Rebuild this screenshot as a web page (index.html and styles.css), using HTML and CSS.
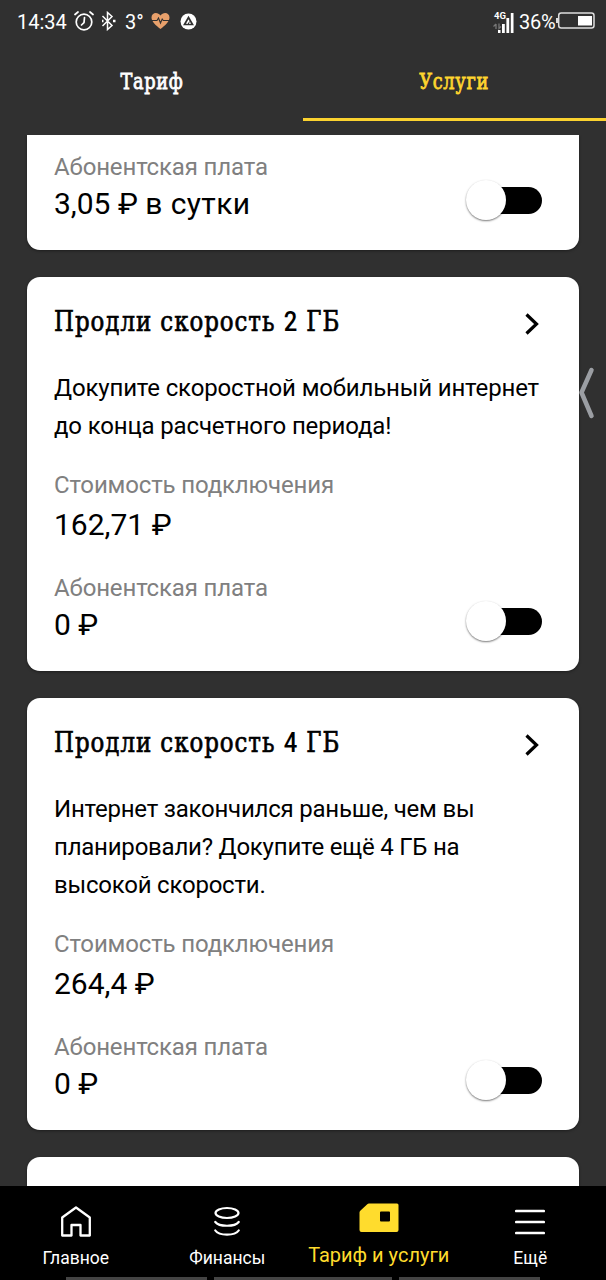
FILE: index.html
```html
<!DOCTYPE html>
<html lang="ru">
<head>
<meta charset="utf-8">
<title>Тариф и услуги</title>
<link rel="stylesheet" href="styles.css">
</head>
<body>
<div class="app">
  <header class="status">
    <span class="clock">14:34</span>
    <svg class="alarm" width="20" height="22" viewBox="0 0 20 22" fill="none" stroke="#fff" stroke-width="1.7" stroke-linecap="round"><circle cx="10" cy="12" r="7.8"/><path d="M10.5 7.5L10 12.500L7.500 15M1 4.500L4 2M16 2L19 4.500"/></svg>
    <svg class="bluetooth" width="15" height="20" viewBox="0 0 15 20" fill="none" stroke="#fff" stroke-width="1.500"><path d="M1.500 5L11 14.500L6.500 18.500V1.500L11 5.500L1.500 15"/><path d="M1 10h1.500M12 10h2.500" stroke-width="2.300"/></svg>
    <span class="temp">3°</span>
    <svg class="heart" width="19" height="18" viewBox="0 0 19 18"><path fill="#e8a06b" d="M9.500 17C5 13.500.5 9.500.5 5.500C.5 0 7-.500 9.500 3.500C12-.500 18.500 0 18.500 5.500C18.500 9.500 14 13.500 9.500 17Z"/><path d="M0 8.500H6L7.500 6L9.500 11L11.200 7L12.300 8.500H19" fill="none" stroke="#303030" stroke-width="1.100"/></svg>
    <svg class="badge" width="17" height="17" viewBox="0 0 17 17"><circle cx="8.500" cy="8.500" r="8" fill="#fff"/><path d="M8.500 4.500L12.500 11.500H4.500Z" fill="none" stroke="#303030" stroke-width="1.700"/><path d="M8 11.500L9.500 8.500" stroke="#303030"/></svg>
    <span class="gap"></span>
    <span class="network">
      <span class="generation">4G</span>
      <svg class="bars" width="21" height="21" viewBox="0 0 21 21"><path fill="#fff" d="M5 18h2.500v3H5zM9 12h2.800v9H9zM13.400 6h2.800v15h-2.800zM17.800 1h2.700v20h-2.700z"/><path d="M3 12v5M.5 14.500L3 12M6 11.500v5L8 14.500" fill="none" stroke="#777" stroke-width="1.300"/></svg>
    </span>
    <span class="percent">36%</span>
    <svg class="battery" width="39" height="17" viewBox="0 0 39 17"><rect x="2.700" y="1" width="35.300" height="15" rx="2.500" fill="none" stroke="#ddd" stroke-width="1.500"/><path fill="#ddd" d="M0 6h2.500v5H0z"/><path fill="#fff" d="M22 4h14v9.500H22z"/></svg>
  </header>
  <nav class="tabs">
    <a class="tab"><span class="slab">Тариф</span></a>
    <a class="tab tab-active"><span class="slab">Услуги</span></a>
  </nav>
  <main class="list">
    <section class="card card-first">
      <div class="label">Абонентская плата</div>
      <div class="row"><div class="value">3,05 ₽ <span class="period">в сутки</span></div><span class="toggle"><i class="knob"></i></span></div>
    </section>
    <section class="card">
      <div class="heading"><h2 class="title">Продли скорость <span class="digit">2</span> ГБ</h2><svg class="arrow" width="14" height="22" viewBox="0 0 14 22"><path d="M1.500 1.500L11.500 11L1.500 20.500" fill="none" stroke="#000" stroke-width="3.200"/></svg></div>
      <p class="about">Докупите скоростной мобильный интернет<br>до конца расчетного периода!</p>
      <div class="label">Стоимость подключения</div>
      <div class="value price">162,71 ₽</div>
      <div class="label">Абонентская плата</div>
      <div class="row"><div class="value">0 ₽</div><span class="toggle"><i class="knob"></i></span></div>
    </section>
    <section class="card">
      <div class="heading"><h2 class="title">Продли скорость <span class="digit">4</span> ГБ</h2><svg class="arrow" width="14" height="22" viewBox="0 0 14 22"><path d="M1.500 1.500L11.500 11L1.500 20.500" fill="none" stroke="#000" stroke-width="3.200"/></svg></div>
      <p class="about about-long">Интернет закончился раньше, чем вы<br>планировали? Докупите ещё 4 ГБ на<br>высокой скорости.</p>
      <div class="label">Стоимость подключения</div>
      <div class="value price">264,4 ₽</div>
      <div class="label">Абонентская плата</div>
      <div class="row"><div class="value">0 ₽</div><span class="toggle"><i class="knob"></i></span></div>
    </section>
    <section class="card card-next"></section>
  </main>
  <footer class="bottom">
    <a class="item"><svg width="30" height="31" viewBox="0 0 30 31" fill="none" stroke="#fff" stroke-width="2.300" stroke-linejoin="round"><path d="M1.200 11.500L15 1.500L28.800 11.500V29.500H19.500V19H10.500V29.500H1.200Z"/></svg><span>Главное</span></a>
    <a class="item"><svg width="26" height="31" viewBox="0 0 26 31" fill="none" stroke="#fff" stroke-width="2.200" stroke-linecap="round"><ellipse cx="13" cy="7" rx="11.500" ry="5"/><path d="M1.300 16C5 21 21 21 24.700 16M1.300 24.500C5 30 21 30 24.700 24.500"/></svg><span>Финансы</span></a>
    <a class="item item-active"><svg width="40" height="30" viewBox="0 0 40 30"><path fill="#ffdc2d" fill-rule="evenodd" d="M10 1H38Q39.500 1 39.500 2.500V27.500Q39.500 29.500 37.500 29.500H2.500Q.5 29.500.5 27.500V10Q.5 9 1.500 8L8 2Q9 1 10 1ZM22 9Q21 9 21 10V18Q21 19 22 19H30Q31 19 31 18V10Q31 9 30 9Z"/></svg><span>Тариф и услуги</span></a>
    <a class="item"><svg width="30" height="31" viewBox="0 0 30 31"><path d="M1.300 5H28.700M1.300 16H28.700M1.300 27H28.700" stroke="#fff" stroke-width="2.700" stroke-linecap="round"/></svg><span>Ещё</span></a>
  </footer>
  <div class="strips"><i></i><i class="wide"></i><i></i></div>
  <svg class="handle" width="18" height="52" viewBox="0 0 18 52"><path d="M14.500 3L4.500 25.500L14.500 49" fill="none" stroke="#9b9ea3" stroke-width="4.500" stroke-linecap="round" stroke-linejoin="round"/></svg>
</div>
</body>
</html>
```
FILE: styles.css
```css
* { box-sizing: border-box; }
body { margin: 0; background: #303030; font-family: Roboto, "Noto Sans", sans-serif; }
.app { position: relative; width: 606px; height: 1280px; overflow: hidden; display: flex; flex-direction: column; }

.status { display: flex; align-items: center; height: 44px; padding: 0 11px 0 17px; color: #fff; font-size: 20px; }
.clock { width: 57px; }
.alarm { margin-bottom: 2px; }
.bluetooth { margin: 0 0 3px 7px; }
.temp { width: 26px; margin-left: 9px; }
.heart { margin-bottom: 2px; }
.badge { margin: 0 0 2px 10px; }
.gap { flex: 1; }
.network { position: relative; height: 21px; }
.network svg { display: block; }
.generation { position: absolute; left: 1px; top: -1px; font: bold 9.500px/10px Roboto, sans-serif; background: #303030; }
.percent { margin-left: 5px; letter-spacing: -.3px; width: 37px; }
.battery { margin-bottom: 3px; }

.tabs { display: flex; height: 91px; padding-bottom: 14px; color: #fff; flex: none; }
.tab { flex: 1; display: flex; justify-content: center; padding-top: 22px; border-bottom: 3px solid transparent; }
.tab-active { color: #ffd52e; border-color: #fbd22f; }
.slab { font: 22px/32px "DejaVu Serif", serif; height: 32px; letter-spacing: .8px; transform: scaleX(.81); -webkit-text-stroke: .8px; }

.list { flex: 1; min-height: 0; overflow: hidden; padding: 0 27px; display: flex; flex-direction: column; gap: 27px; }
.card { flex: none; background: #fff; color: #000; border-radius: 13px; padding: 26px 37px 26px 27px; box-shadow: 0 1px 3px #0006; }
.card-first { padding-top: 17px; border-radius: 0 0 13px 13px; }
.card-next { height: 60px; }
.heading { display: flex; justify-content: space-between; align-items: center; height: 36px; margin-bottom: 30px; }
.title { margin: 2px 0 0; font: 27px/36px "DejaVu Serif", serif; letter-spacing: 1.100px; white-space: nowrap; transform: scaleX(.85); transform-origin: left; -webkit-text-stroke: .7px; }
.digit { font: 500 28px/30px Roboto, sans-serif; -webkit-text-stroke: 0; }
.arrow { margin: 6px 3px 0 0; flex: none; }
.about { margin: 0 0 25px; font-size: 24px; line-height: 38px; letter-spacing: -.15px; white-space: nowrap; }
.about-long { letter-spacing: -.22px; }
.label { font-size: 24px; line-height: 30px; letter-spacing: -.15px; color: #808080; }
.value { font-size: 30px; line-height: 40px; }
.period { letter-spacing: .4px; }
.price { margin: 5px 0 28px; }
.row { display: flex; justify-content: space-between; margin-top: 2px; height: 40px; }
.toggle { width: 76px; height: 40px; margin-top: -4px; display: flex; align-items: center; }
.toggle::before { content: ""; width: 56px; height: 27px; margin-left: 20px; border-radius: 14px; background: #000; }
.knob { width: 40px; height: 40px; margin-left: -76px; border-radius: 50%; background: #fff; box-shadow: 0 1px 2px #0008; flex: none; }

.bottom { flex: none; height: 94px; display: flex; background: #000; color: #fff; font-size: 17.500px; }
.item { width: 25%; display: flex; flex-direction: column; align-items: center; padding-top: 20px; line-height: 24px; white-space: nowrap; }
.item svg { flex: none; height: 31px; }
.item span { margin-top: 9px; }
.item-active { color: #ffdc2d; font-size: 20px; padding-top: 16px; }
.item-active span { margin-top: 10px; }
.strips { position: absolute; left: 66px; bottom: 0; display: flex; gap: 7px; }
.strips i { width: 141px; height: 3px; background: #444; }
.strips .wide { width: 178px; }
.handle { position: absolute; left: 577px; top: 367px; }
```
